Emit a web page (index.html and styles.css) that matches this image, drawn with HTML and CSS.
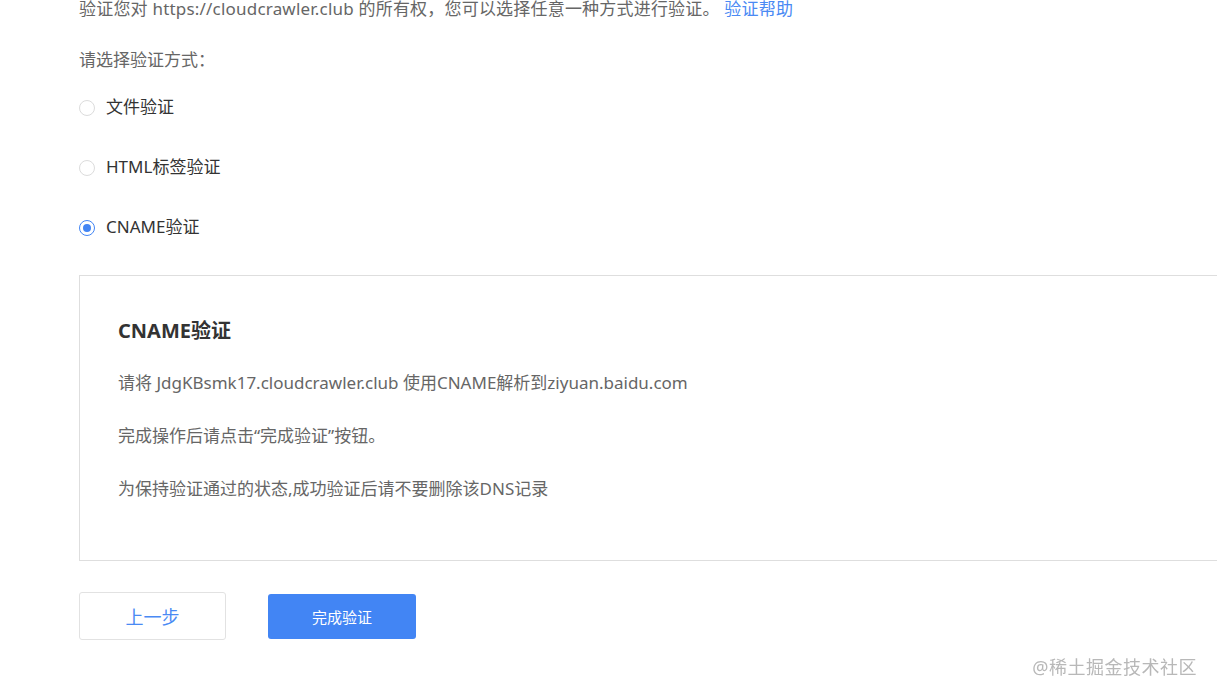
FILE: index.html
```html
<!DOCTYPE html>
<html lang="zh-CN">
<head>
<meta charset="utf-8">
<title>CNAME验证</title>
<link rel="stylesheet" href="styles.css">
</head>
<body>
<div class="page">
  <p class="intro">验证您对 https://cloudcrawler.club 的所有权，您可以选择任意一种方式进行验证。 <a class="help" href="#">验证帮助</a></p>
  <p class="prompt">请选择验证方式：</p>
  <div class="options">
    <label class="option"><span class="radio"></span><span class="option-text">文件验证</span></label>
    <label class="option"><span class="radio"></span><span class="option-text">HTML标签验证</span></label>
    <label class="option"><span class="radio checked"></span><span class="option-text">CNAME验证</span></label>
  </div>
  <div class="panel">
    <h3 class="panel-title">CNAME验证</h3>
    <p class="panel-text">请将 JdgKBsmk17.cloudcrawler.club 使用CNAME解析到ziyuan.baidu.com</p>
    <p class="panel-text">完成操作后请点击“完成验证”按钮。</p>
    <p class="panel-text">为保持验证通过的状态,成功验证后请不要删除该DNS记录</p>
  </div>
  <div class="actions">
    <button class="btn btn-prev">上一步</button>
    <button class="btn btn-done">完成验证</button>
  </div>
</div>
<div class="watermark">@稀土掘金技术社区</div>
</body>
</html>
```
FILE: styles.css
```css
html, body {
  margin: 0;
  padding: 0;
  overflow: hidden;
  background: #fff;
}
body {
  font-family: "Noto Sans", "Noto Sans CJK SC", sans-serif;
  color: #666;
  font-size: 17px;
}
.page {
  padding-left: 79px;
  margin-top: -3px;
  width: 1250px;
}
p { margin: 0; }
.intro {
  line-height: 24px;
  color: #666;
  letter-spacing: 0.2px;
}
.help {
  color: #4a8af4;
  text-decoration: none;
}
.prompt {
  margin-top: 27px;
  line-height: 24px;
  color: #666;
}
.options {
  margin-top: 24px;
  display: flex;
  flex-direction: column;
  gap: 36px;
}
.option {
  display: flex;
  align-items: center;
  height: 24px;
  color: #333;
  gap: 11px;
}
.option-text {
  line-height: 24px;
  margin-bottom: 3px;
}
.radio {
  width: 14px;
  height: 14px;
  border: 1px solid #dcdcdc;
  border-radius: 50%;
  box-sizing: content-box;
  position: relative;
}
.radio.checked {
  border-color: #4285f4;
}
.radio.checked::after {
  content: "";
  position: absolute;
  left: 3px;
  top: 3px;
  width: 8px;
  height: 8px;
  border-radius: 50%;
  background: #4285f4;
}
.panel {
  margin-top: 35px;
  border: 1px solid #dedede;
  padding: 41px 38px 59px;
}
.panel-title {
  margin: 0;
  font-size: 20px;
  line-height: 28px;
  font-weight: bold;
  color: #333;
}
.panel-text {
  margin-top: 29px;
  line-height: 24px;
  color: #666;
}
.panel-title + .panel-text { margin-top: 26px; }
.actions {
  margin-top: 31px;
  display: flex;
  align-items: center;
  gap: 42px;
}
.btn {
  font-family: "Noto Sans", "Noto Sans CJK SC", sans-serif;
  border-radius: 3px;
  cursor: pointer;
}
.btn-prev {
  width: 147px;
  height: 48px;
  background: #fff;
  border: 1px solid #e2e2e2;
  color: #4a8af4;
  font-size: 18px;
}
.btn-done {
  width: 148px;
  height: 45px;
  background: #4285f4;
  border: none;
  color: #fff;
  font-size: 15px;
}
.watermark {
  position: fixed;
  right: 20px;
  bottom: 20px;
  font-size: 18px;
  color: #b8b8b8;
  letter-spacing: 0.5px;
}
```
